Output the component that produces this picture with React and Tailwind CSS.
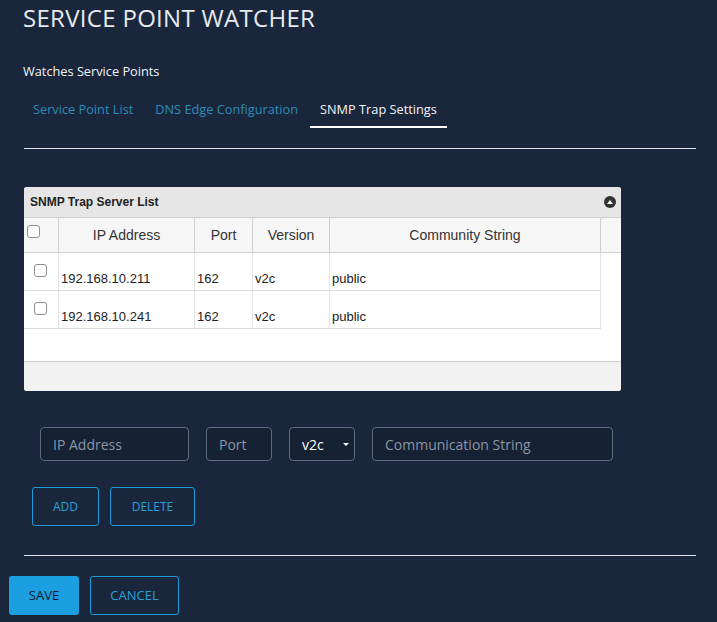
import React from 'react'

const servers = [
  { ip: '192.168.10.211', port: '162', version: 'v2c', community: 'public' },
  { ip: '192.168.10.241', port: '162', version: 'v2c', community: 'public' },
]

const Checkbox = ({ className = '' }) => (
  <span
    className={`block w-[13px] h-[13px] rounded-[3px] border border-[#8f8f8f] bg-white ${className}`}
  />
)

const Field = ({ placeholder, className = '' }) => (
  <div
    className={`h-[34px] flex items-center pl-[12px] rounded-[4px] border border-[#5f6b7d] bg-[#162134] text-[14px] text-[#8a95a5] ${className}`}
  >
    {placeholder}
  </div>
)

const OutlineButton = ({ children, className = '' }) => (
  <button
    className={`h-[39px] rounded-[3px] border border-[#1c9ad8] text-[12px] text-[#2aa0da] uppercase ${className}`}
  >
    {children}
  </button>
)

export default function App() {
  return (
    <div className="min-h-[622px] bg-[#1a263b] font-['Open_Sans',sans-serif] text-white">
      {/* Header */}
      <div className="pl-[23px] pt-[2px]">
        <h1 className="text-[24px] leading-[32px] font-normal text-[#e7eaef] tracking-[0.3px]">
          SERVICE POINT WATCHER
        </h1>
        <p className="mt-[28px] text-[12.75px] leading-[18px] text-[#f2f4f7]">Watches Service Points</p>
      </div>

      {/* Tabs */}
      <div className="mt-[20px] pl-[23px] flex gap-[2px] text-[12.75px] leading-[18px]">
        <div className="px-[10px] pb-[8px] border-b-2 border-transparent text-[#2b8db8]">Service Point List</div>
        <div className="px-[10px] pb-[8px] border-b-2 border-transparent text-[#2b8db8]">DNS Edge Configuration</div>
        <div className="px-[10px] pb-[8px] border-b-2 border-white text-[#f2f4f7]">SNMP Trap Settings</div>
      </div>

      <div className="mt-[20px] ml-[24px] w-[672px] h-px bg-[#dfe3e8]" />

      {/* Trap server table */}
      <div className="mt-[38px] ml-[24px] w-[597px] h-[204px] rounded-[3px] overflow-hidden bg-white flex flex-col font-['Liberation_Sans',Arial,sans-serif] text-[#222]">
        <div className="h-[31px] shrink-0 bg-[#e6e6e6] border-b border-[#d0d0d0] flex items-center justify-between pl-[6px] pr-[5px]">
          <span className="text-[12px] font-bold text-[#222]">SNMP Trap Server List</span>
          <span className="w-[12px] h-[12px] rounded-full bg-[#333] flex items-center justify-center">
            <span className="block w-0 h-0 border-l-[3.5px] border-r-[3.5px] border-b-[4px] border-l-transparent border-r-transparent border-b-white mb-[1px]" />
          </span>
        </div>

        <div className="h-[35px] shrink-0 grid grid-cols-[35px_136px_58px_77px_271px_20px] bg-[#f6f6f6] border-b border-[#cfcfcf] text-[14px] text-[#333]">
          <div className="border-r border-[#cfcfcf] pl-[3px] pt-[7px]">
            <Checkbox />
          </div>
          <div className="border-r border-[#cfcfcf] flex items-center justify-center">IP Address</div>
          <div className="border-r border-[#cfcfcf] flex items-center justify-center">Port</div>
          <div className="border-r border-[#cfcfcf] flex items-center justify-center">Version</div>
          <div className="border-r border-[#cfcfcf] flex items-center justify-center">Community String</div>
          <div />
        </div>

        <div className="flex-1">
          {servers.map((s, i) => (
            <div
              key={i}
              className="h-[38px] w-[577px] grid grid-cols-[35px_136px_58px_77px_271px] border-b border-[#dcdcdc] text-[13px] leading-[16px]"
            >
              <div className="border-r border-[#e3e3e3] pl-[10px] pt-[11px]">
                <Checkbox />
              </div>
              <div className="border-r border-[#e3e3e3] flex items-end pl-[2px] pb-[3px]">{s.ip}</div>
              <div className="border-r border-[#e3e3e3] flex items-end pl-[2px] pb-[3px]">{s.port}</div>
              <div className="border-r border-[#e3e3e3] flex items-end pl-[2px] pb-[3px]">{s.version}</div>
              <div className="border-r border-[#e3e3e3] flex items-end pl-[2px] pb-[3px]">{s.community}</div>
            </div>
          ))}
        </div>

        <div className="h-[30px] shrink-0 bg-[#f2f2f2] border-t border-[#d0d0d0]" />
      </div>

      {/* New server form */}
      <div className="mt-[36px] ml-[40px] flex gap-[17px]">
        <Field placeholder="IP Address" className="w-[149px]" />
        <Field placeholder="Port" className="w-[66px]" />
        <div className="w-[66px] h-[34px] rounded-[4px] border border-[#5f6b7d] bg-[#162134] flex items-center justify-between pl-[12px] pr-[5px] text-[14px] text-white">
          <span>v2c</span>
          <span className="block w-0 h-0 border-l-[3px] border-r-[3px] border-t-[3px] border-l-transparent border-r-transparent border-t-white" />
        </div>
        <Field placeholder="Communication String" className="w-[241px]" />
      </div>

      <div className="mt-[26px] ml-[32px] flex gap-[11px]">
        <OutlineButton className="w-[67px]">Add</OutlineButton>
        <OutlineButton className="w-[85px]">Delete</OutlineButton>
      </div>

      <div className="mt-[29px] ml-[24px] w-[672px] h-px bg-[#dfe3e8]" />

      {/* Footer actions */}
      <div className="mt-[20px] ml-[9px] flex gap-[11px] pb-[8px]">
        <button className="w-[70px] h-[39px] rounded-[3px] bg-[#1c9fe0] text-[13px] text-[#0f1b2d]">SAVE</button>
        <OutlineButton className="w-[89px] text-[13px]">Cancel</OutlineButton>
      </div>
    </div>
  )
}
